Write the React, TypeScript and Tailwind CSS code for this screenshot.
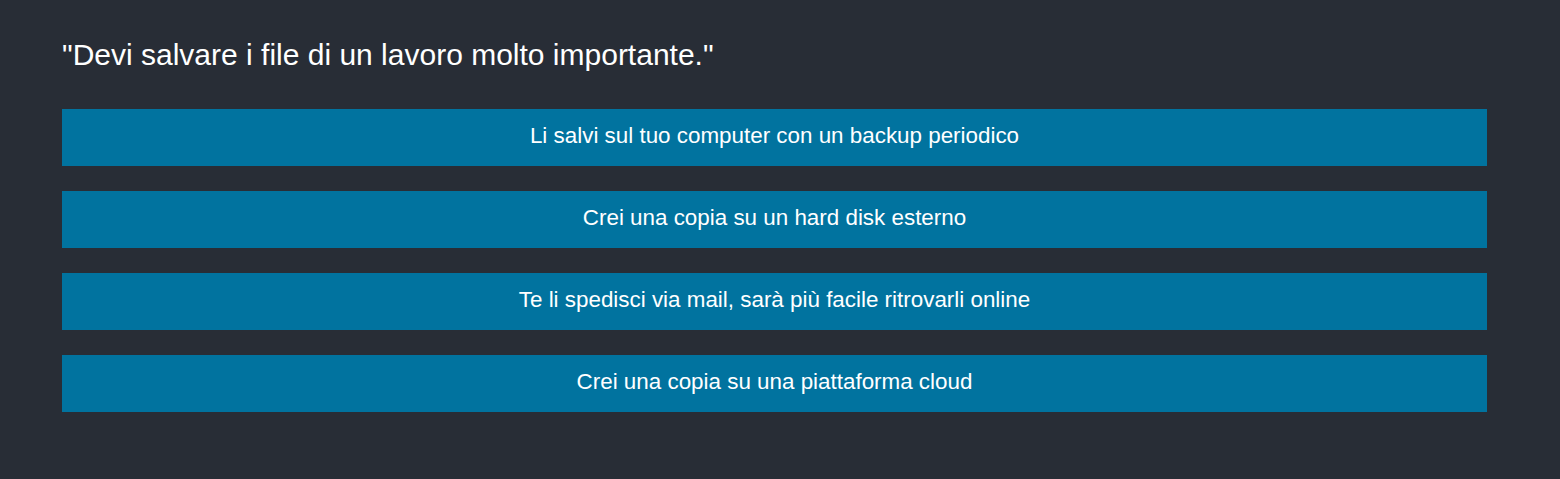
const answers = [
  "Li salvi sul tuo computer con un backup periodico",
  "Crei una copia su un hard disk esterno",
  "Te li spedisci via mail, sarà più facile ritrovarli online",
  "Crei una copia su una piattaforma cloud",
];

export default function App() {
  return (
    <div className="min-h-[479px] w-full bg-[#282d36] font-['Liberation_Sans',Arial,sans-serif] text-white">
      <div className="w-[1425px] ml-[62px] pt-[36px]">
        <h2 className="text-[30px] leading-[38px]">
          "Devi salvare i file di un lavoro molto importante."
        </h2>
        <div className="mt-[35px] flex flex-col gap-[25px]">
          {answers.map((a) => (
            <button
              key={a}
              className="h-[57px] w-full bg-[#01739f] pb-[3px] text-center text-[22.4px] leading-[28px] text-white"
            >
              {a}
            </button>
          ))}
        </div>
      </div>
    </div>
  );
}
